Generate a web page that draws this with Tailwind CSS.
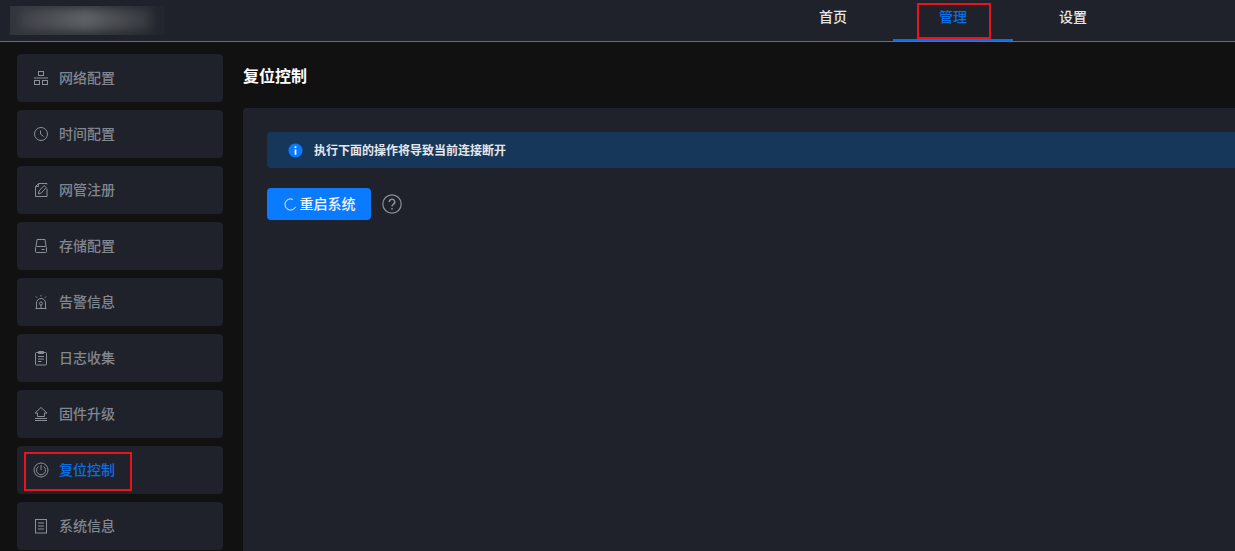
<!DOCTYPE html>
<html lang="zh">
<head>
<meta charset="utf-8">
<title>复位控制</title>
<script src="https://cdn.jsdelivr.net/npm/@tailwindcss/browser@4"></script>
</head>
<body class="h-[551px] w-[1235px] overflow-hidden bg-[#111112] font-['Noto_Sans_CJK_SC','Noto_Sans',sans-serif]">
<header class="flex h-[42px] items-stretch justify-between border-b border-[#6a6c70] bg-[#1f222b]">
  <div class="relative my-[6px] ml-[10px] w-[155px] overflow-hidden bg-gradient-to-r from-[#32353b] via-[#32353b] to-[#22252d]">
    <div class="absolute bottom-[5px] left-[10px] right-[14px] top-[3px] rounded bg-gradient-to-r from-[#3e4147] via-[#5f6266] to-[#34373d] blur-[4px]"></div>
  </div>
  <nav class="flex pr-[102px] text-sm font-medium text-[#e6e7e9]">
    <a class="flex w-[120px] items-center justify-center pb-[10px]">首页</a>
    <a class="relative flex w-[120px] items-center justify-center pb-[10px] text-[#0a6fe8]">管理
      <span class="absolute inset-x-0 bottom-0 h-[2px] bg-[#0a6fe8]"></span>
      <span class="absolute left-[24px] top-[3px] h-[36px] w-[74px] border-2 border-[#e8141c]"></span>
    </a>
    <a class="flex w-[120px] items-center justify-center pb-[10px]">设置</a>
  </nav>
</header>
<div class="flex">
  <aside class="flex w-[243px] shrink-0 flex-col gap-2 pl-[17px] pr-[20px] pt-[12px] text-sm font-medium text-[#81868f]">
    <a class="flex h-12 items-center gap-[10px] rounded bg-[#1f222b] pl-[16px]">
      <svg class="size-[16px]" viewBox="0 0 16 16" fill="none" stroke="#8a8f98"><rect x="5.500" y="1.500" width="5" height="4"/><rect x="1.500" y="10.500" width="5" height="4"/><rect x="9.500" y="10.500" width="5" height="4"/><path d="M1 8h14"/></svg>
      <span class="mb-[2px]">网络配置</span></a>
    <a class="flex h-12 items-center gap-[10px] rounded bg-[#1f222b] pl-[16px]">
      <svg class="size-[16px]" viewBox="0 0 16 16" fill="none" stroke="#8a8f98"><circle cx="8" cy="8" r="6.500"/><path d="M7.500 4.500V8l3 2.500"/></svg>
      <span class="mb-[2px]">时间配置</span></a>
    <a class="flex h-12 items-center gap-[10px] rounded bg-[#1f222b] pl-[16px]">
      <svg class="size-[16px]" viewBox="0 0 16 16" fill="none" stroke="#8a8f98"><path d="M5.500 1.500h8.500v1M14 6.500v8H2.500V4.500l3-3v3h-3"/><path d="M5.500 12l.5-3 5-5.500 2.300 2-5 5.500z"/></svg>
      <span class="mb-[2px]">网管注册</span></a>
    <a class="flex h-12 items-center gap-[10px] rounded bg-[#1f222b] pl-[16px]">
      <svg class="size-[16px]" viewBox="0 0 16 16" fill="none" stroke="#8a8f98"><path d="M3 8.500 4 1.500h8l1 7"/><rect x="2.500" y="8.500" width="11" height="6" rx="1"/><path d="M8.500 11.500h3"/></svg>
      <span class="mb-[2px]">存储配置</span></a>
    <a class="flex h-12 items-center gap-[10px] rounded bg-[#1f222b] pl-[16px]">
      <svg class="size-[16px]" viewBox="0 0 16 16" fill="none" stroke="#8a8f98"><path d="M2.500 14.500h11M3.500 14.500V9a4.500 4.500 0 0 1 9 0v5.500"/><circle cx="8" cy="9.500" r="1.500"/><path d="M8 11v3.500M8 1v1.500M3 2.500l1 1.200M13 2.500l-1 1.200"/></svg>
      <span class="mb-[2px]">告警信息</span></a>
    <a class="flex h-12 items-center gap-[10px] rounded bg-[#1f222b] pl-[16px]">
      <svg class="size-[16px]" viewBox="0 0 16 16" fill="none" stroke="#8a8f98"><rect x="2.500" y="2.500" width="11" height="12.500" rx="1"/><path d="M5.500 1.500h5v2h-5zM5 6.500h6M5 9h6M5 11.500h3.500"/></svg>
      <span class="mb-[2px]">日志收集</span></a>
    <a class="flex h-12 items-center gap-[10px] rounded bg-[#1f222b] pl-[16px]">
      <svg class="size-[16px]" viewBox="0 0 16 16" fill="none" stroke="#8a8f98"><path d="M8 1.500 14 7h-2.500v3.500h-7V7H2z"/><path d="M2 12.500h12M2 14.500h12"/></svg>
      <span class="mb-[2px]">固件升级</span></a>
    <a class="relative flex h-12 items-center gap-[10px] rounded bg-[#1f222b] pl-[16px] text-[#0a6fe8]">
      <svg class="size-[16px]" viewBox="0 0 16 16" fill="none" stroke="#8a8f98"><circle cx="8" cy="8" r="7"/><path d="M5.500 4.500a4.500 4.500 0 1 0 5 0M8 3v5"/></svg>
      <span class="mb-[2px]">复位控制</span>
      <span class="absolute left-[7px] top-[6px] h-[39px] w-[108px] border-2 border-[#e8141c]"></span>
    </a>
    <a class="flex h-12 items-center gap-[10px] rounded bg-[#1f222b] pl-[16px]">
      <svg class="size-[16px]" viewBox="0 0 16 16" fill="none" stroke="#8a8f98"><rect x="2.500" y="1.500" width="11" height="13.500"/><path d="M5 5h6M5 8h6M5 11h6"/></svg>
      <span class="mb-[2px]">系统信息</span></a>
  </aside>
  <main class="min-w-0 flex-1">
    <h1 class="flex h-[66px] items-center text-base font-bold text-white">复位控制</h1>
    <section class="h-[460px] rounded-tl bg-[#1f222b] px-[24px] pt-[24px]">
      <div class="flex h-9 w-[1000px] items-center gap-[11px] rounded-sm bg-[#17375a] pl-[21px] text-xs font-bold text-[#e6e7e9]">
        <svg class="size-[15px]" viewBox="0 0 16 16"><circle cx="8" cy="8" r="7.500" fill="#0a7bff"/><path d="M8 3.500v1.800M8 7v5.500" stroke="#fff" stroke-width="1.800"/></svg>
        执行下面的操作将导致当前连接断开
      </div>
      <div class="mt-[20px] flex items-center gap-[11px]">
        <button class="flex h-8 w-[104px] items-center justify-center gap-[3px] rounded bg-[#0a7bff] pl-[1px] text-sm font-medium text-[#f2f6ff]">
          <svg class="size-[13px]" viewBox="0 0 14 14" fill="none" stroke="#fff"><path d="M9.500 1.500A6 6 0 1 0 12.500 9.500"/></svg>
          <span class="mb-[2px]">重启系统</span></button>
        <svg class="size-[20px]" viewBox="0 0 20 20" fill="none" stroke="#8a8f98" stroke-width="1.200"><circle cx="10" cy="10" r="9.200"/><path d="M7.300 8a2.700 2.700 0 1 1 4 2.300c-.9.600-1.300 1-1.300 2.200M10 14v1.500" stroke-width="1.500"/></svg>
      </div>
    </section>
  </main>
</div>
</body>
</html>
